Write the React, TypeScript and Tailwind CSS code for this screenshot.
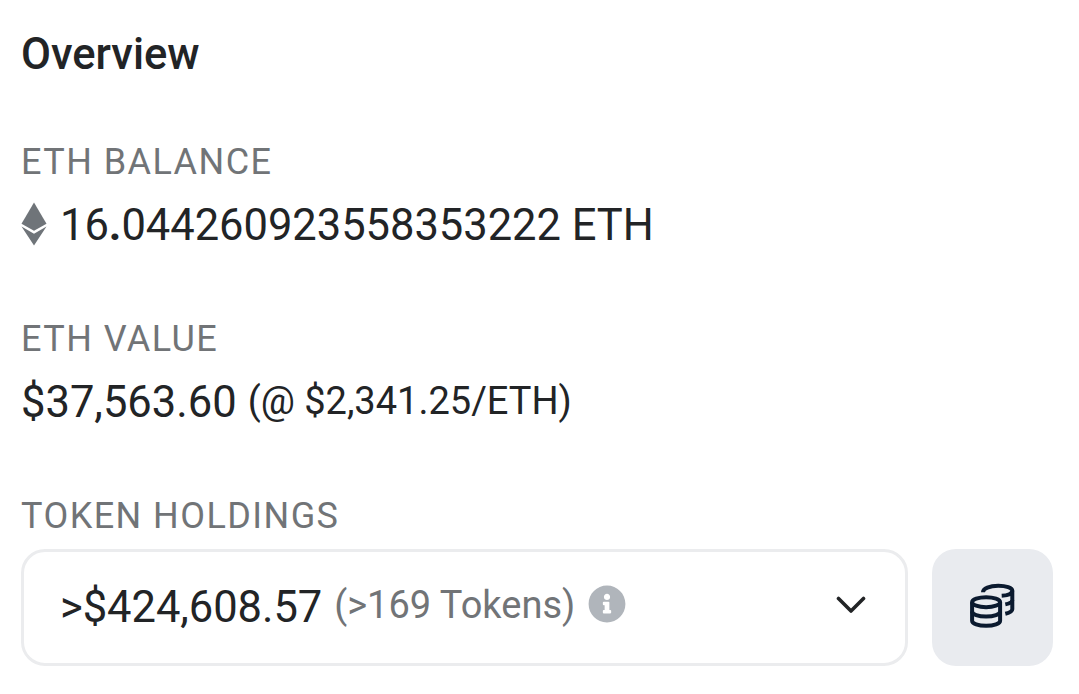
import type { ReactNode } from "react";
import { FaInfoCircle } from "react-icons/fa";

const EthIcon = () => {
  return (
    <svg className="mb-1 h-11 w-[26px] shrink-0" viewBox="0 0 26 44" fill="#6f7479">
      <path d="M13 .5 25.5 21.8 13 28.8.5 21.8z" />
      <path d="M.5 24.6 13 31.8l12.5-7.2L13 43.5z" />
    </svg>
  );
};

const CoinsIcon = () => {
  return (
    <svg
      className="mb-1 h-12 w-12"
      viewBox="0 0 48 48"
      fill="none"
      stroke="#0b1a2f"
      strokeWidth="4"
      strokeLinecap="butt"
      strokeLinejoin="round"
    >
      {/* Front stack */}
      <ellipse cx="17.1" cy="20.2" rx="14" ry="5" />
      <path d="M3.1 20.2v18.500c0 2.900 6.200 5.100 14 5.100s14-2.200 14-5.100V20.200" />
      <path d="M3.1 29.400c0 2.900 6.200 5.100 14 5.100s14-2.200 14-5.100" />
      {/* Back stack */}
      <path d="M14 10.2C14 6.500 20.500 3.700 29.300 3.700c7.800 0 14 2.300 14 5.100v18.500c0 2-2.500 3.400-7 4.500" />
      <path d="M43.300 8.800c0 2.800-4.500 4.700-10.600 5" />
      <path d="M43.300 18c0 2-2.500 3.500-7 4.400" />
    </svg>
  );
};

const Section = ({ label, children }: { label: string; children: ReactNode }) => {
  return (
    <section>
      <h4 className="text-[36px] leading-[44px] tracking-[1.44px] text-[#717477] uppercase">
        {label}
      </h4>
      {children}
    </section>
  );
};

const TokenHoldings = () => {
  return (
    <div className="mt-[11px] flex gap-6">
      <button className="flex h-[117px] w-[887px] items-center rounded-3xl border-3 border-[#ebecee] pl-9 pr-[39px]">
        <span className="text-[43.5px] leading-[56px] tracking-[-0.05px]">&gt;$424,608.57</span>
        <span className="mb-1.5 ml-3 text-[38px] leading-[56px] text-[#717477]">(&gt;169 Tokens)</span>
        <FaInfoCircle className="mb-2 ml-[13px] h-[38px] w-[38px] text-[#b0b5bb]" />
        <svg
          className="mb-1.5 ml-auto h-[18px] w-[30px]"
          viewBox="0 0 30 18"
          fill="none"
          stroke="currentColor"
          strokeWidth="3.6"
          strokeLinecap="round"
          strokeLinejoin="round"
        >
          <path d="M2.5 2.500 15 15 27.500 2.500" />
        </svg>
      </button>
      <button className="flex h-[117px] w-[121px] items-center justify-center rounded-3xl bg-[#e9ebef]">
        <CoinsIcon />
      </button>
    </div>
  );
};

export default function App() {
  return (
    <div className="h-[694px] overflow-hidden bg-white pl-[21px] pt-[30px] font-['Roboto',sans-serif] text-[#222426]">
      <h3 className="text-[43.5px] leading-[50px] font-medium">Overview</h3>

      <div className="mt-[60px] flex flex-col gap-[63px]">
        <Section label="ETH Balance">
          <div className="mt-3.5 flex h-14 items-center gap-[13px] text-[43.5px] leading-[56px]">
            <EthIcon />
            <span className="tracking-[-0.03px]">
              16<b>.</b>044260923558353222 ETH
            </span>
          </div>
        </Section>

        <Section label="ETH Value">
          <div className="mt-3.5 flex h-14 items-center gap-[11px] text-[43.5px] leading-[56px]">
            <span>$37,563.60</span>
            <span className="mb-1 text-[38px]">(@ $2,341.25/ETH)</span>
          </div>
        </Section>

        <Section label="Token Holdings">
          <TokenHoldings />
        </Section>
      </div>
    </div>
  );
}
